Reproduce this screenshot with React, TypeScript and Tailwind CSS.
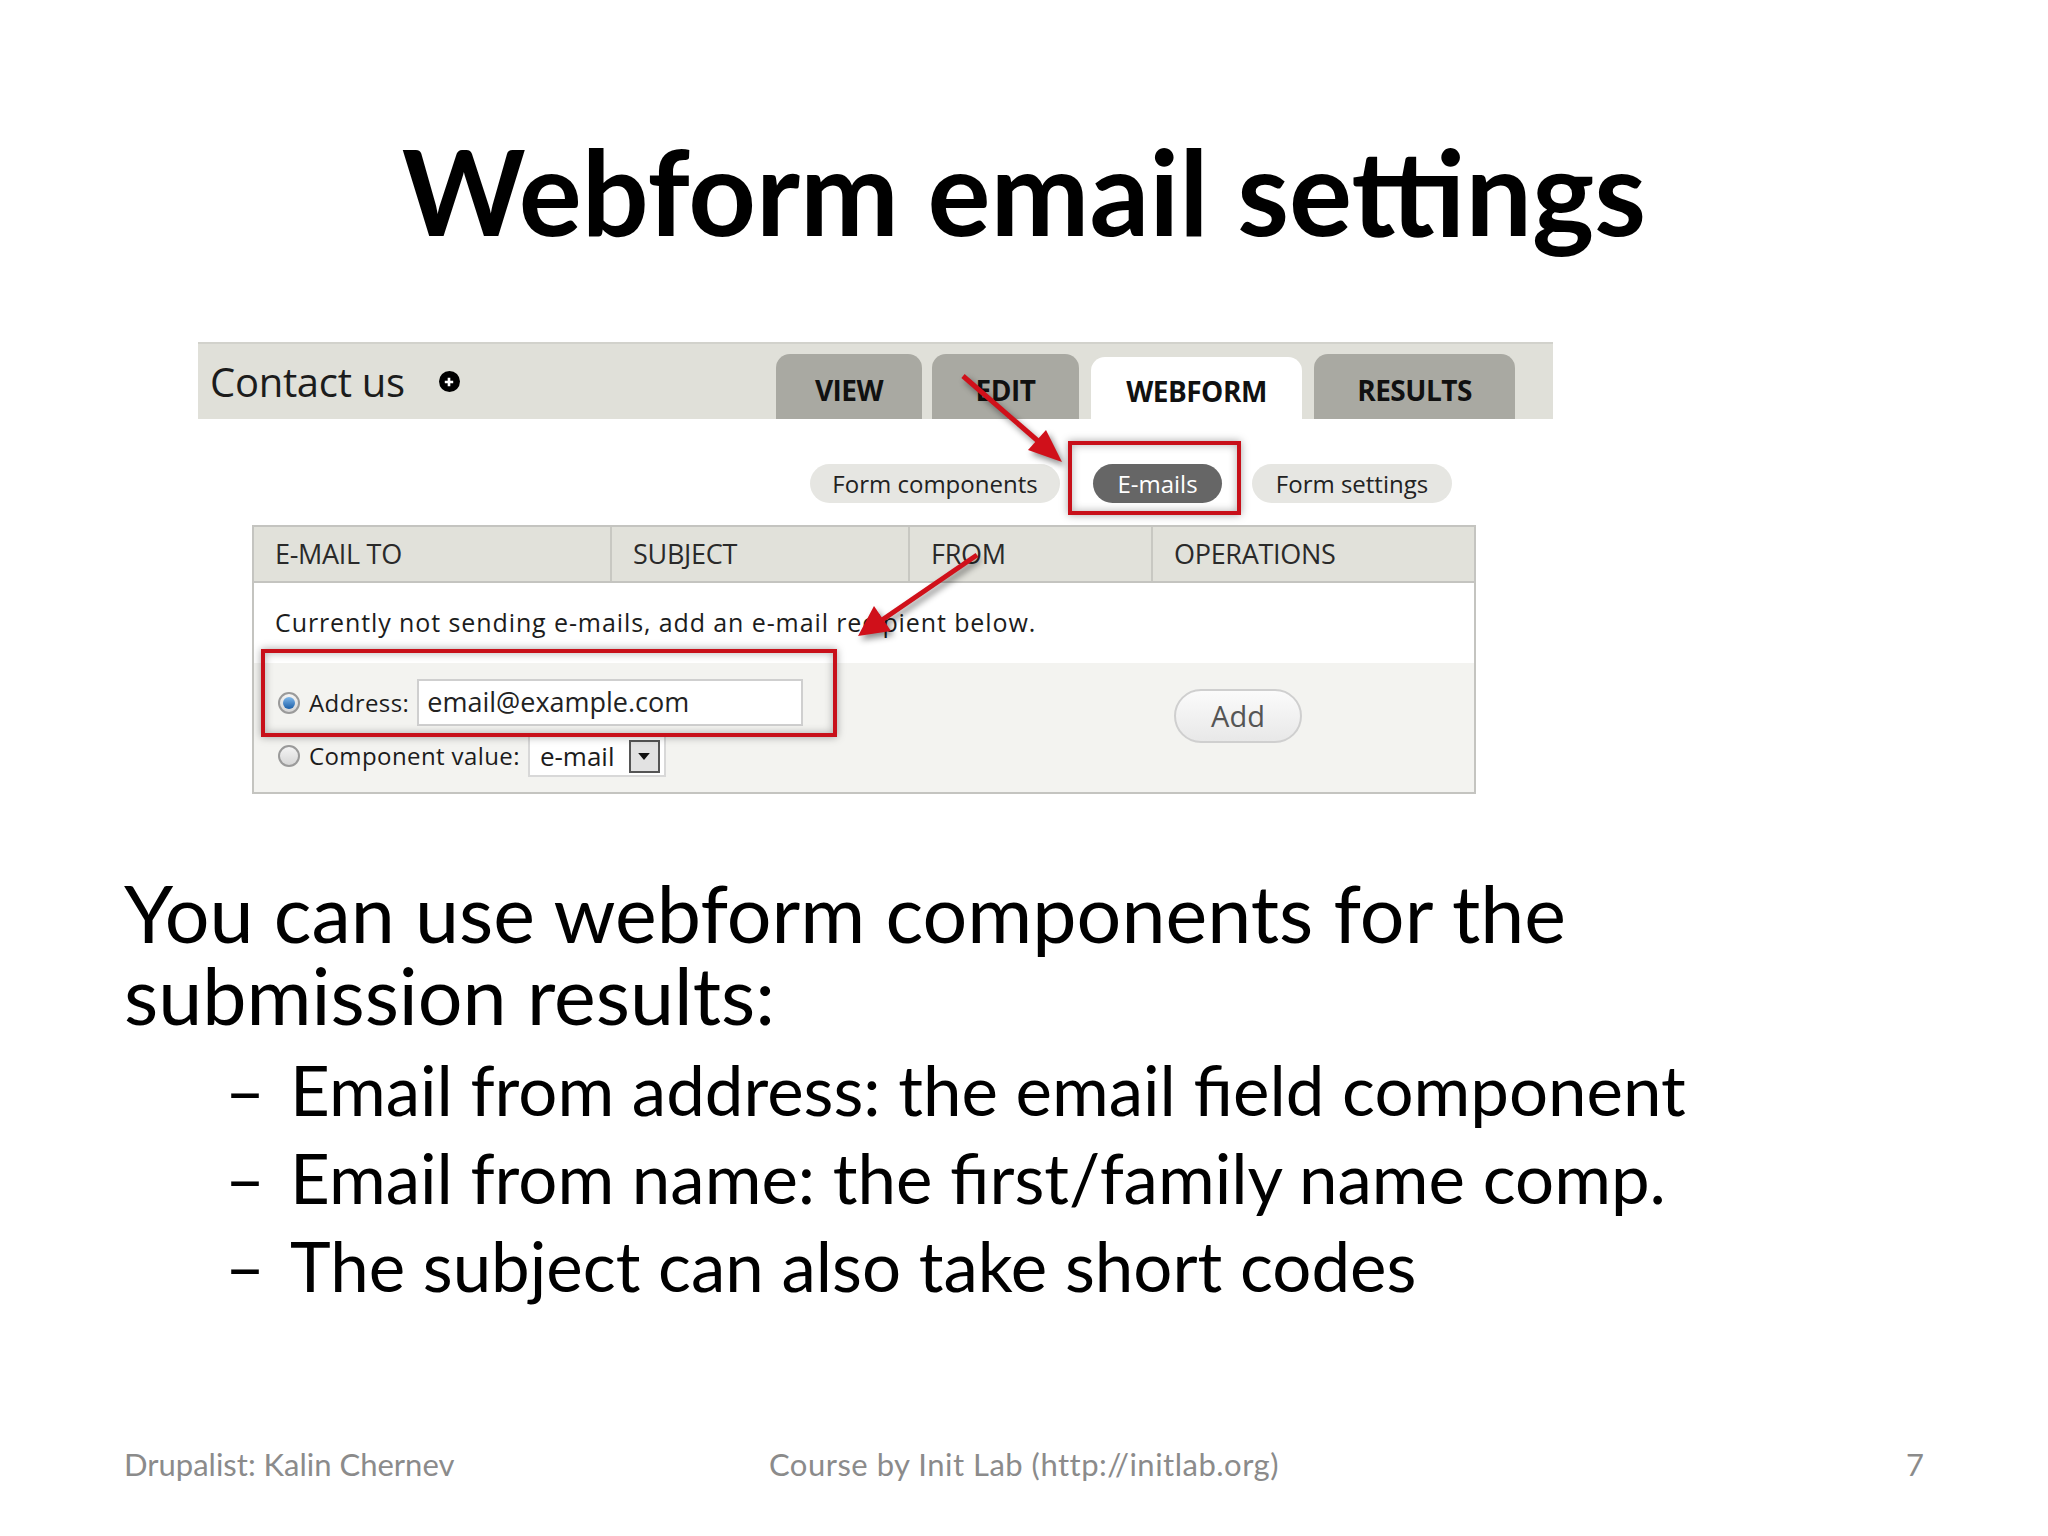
import React from "react";

const slideFont = { fontFamily: "Lato, 'Noto Sans', sans-serif" };
const shotFont = { fontFamily: "'Open Sans', 'Noto Sans', sans-serif" };

function Radio({ on }: { on?: boolean }) {
  return (
    <span className="flex h-[22px] w-[22px] shrink-0 items-center justify-center rounded-full border-2 border-[#9a9a9a] bg-gradient-to-b from-[#f4f4f4] to-[#d6d6d6]">
      {on && <span className="h-[12px] w-[12px] rounded-full bg-gradient-to-b from-[#7fb8ea] to-[#1a5fa8]" />}
    </span>
  );
}

function Tab({ label, active, w }: { label: string; active?: boolean; w: string }) {
  return (
    <div
      className={
        "flex items-center justify-center rounded-t-[14px] text-[28px] font-bold tracking-[-0.5px] text-[#111] " +
        w +
        (active ? " h-[62px] bg-white" : " h-[65px] bg-[#a9a9a2]")
      }
    >
      <span className="mt-[6px]">{label}</span>
    </div>
  );
}

function Screenshot() {
  return (
    <div className="relative ml-[198px] w-[1355px]" style={shotFont}>
      {/* header bar */}
      <div className="flex h-[77px] items-end border-t-2 border-[#d2d2cc] bg-[#e0e0d9]">
        <div className="flex h-full w-[578px] items-center pl-[12px]">
          <span className="text-[40px] leading-none tracking-[-0.3px] text-[#1c1c1c]">Contact us</span>
          <span className="ml-[34px] flex h-[21px] w-[21px] items-center justify-center rounded-full bg-black">
            <svg viewBox="0 0 10 10" className="h-[12px] w-[12px]">
              <path d="M5 1.5v7M1.5 5h7" stroke="white" strokeWidth="2.2" />
            </svg>
          </span>
        </div>
        <div className="flex items-end">
          <Tab label="VIEW" w="w-[146px]" />
          <div className="w-[10px]" />
          <Tab label="EDIT" w="w-[147px]" />
          <div className="w-[12px]" />
          <Tab label="WEBFORM" w="w-[211px]" active />
          <div className="w-[12px]" />
          <Tab label="RESULTS" w="w-[201px]" />
        </div>
      </div>

      {/* secondary tabs */}
      <div className="ml-[612px] mt-[45px] flex h-[39px] items-center text-[24px] text-[#222]">
        <div className="flex h-full w-[250px] items-center justify-center rounded-full bg-[#e6e6e2]">Form components</div>
        <div className="ml-[33px] flex h-full w-[129px] items-center justify-center rounded-full bg-[#666666] text-white">E-mails</div>
        <div className="ml-[30px] flex h-full w-[200px] items-center justify-center rounded-full bg-[#e6e6e2]">Form settings</div>
      </div>

      {/* table */}
      <div className="ml-[54px] mt-[22px] w-[1224px] border-2 border-[#c4c4c0]">
        <div className="flex h-[56px] border-b-2 border-[#c4c4c0] bg-[#e1e1da] text-[27px] tracking-[-0.3px] text-[#2a2a2a]">
          <div className="flex w-[358px] items-center border-r-2 border-[#c8c8c2] pl-[21px]">E-MAIL TO</div>
          <div className="flex w-[298px] items-center border-r-2 border-[#c8c8c2] pl-[21px]">SUBJECT</div>
          <div className="flex w-[243px] items-center border-r-2 border-[#c8c8c2] pl-[21px]">FROM</div>
          <div className="flex flex-1 items-center pl-[21px]">OPERATIONS</div>
        </div>
        <div className="flex h-[80px] items-center bg-white pl-[21px] text-[25px] tracking-[0.9px] text-[#1c1c1c]">
          Currently not sending e-mails, add an e-mail recipient below.
        </div>
        <div className="flex h-[129px] bg-[#f3f3f0]">
          <div className="flex w-[899px] flex-col pl-[24px] pt-[16px] text-[24px] tracking-[0.4px] text-[#1c1c1c]">
            <div className="flex h-[47px] items-center">
              <Radio on />
              <span className="ml-[9px]">Address:</span>
              <div className="ml-[8px] flex h-[47px] w-[386px] items-center border-2 border-[#cfcfcf] bg-white pl-[8px] text-[27px] tracking-normal text-[#222]">
                email@example.com
              </div>
            </div>
            <div className="mt-[9px] flex h-[42px] items-center">
              <Radio />
              <span className="ml-[9px]">Component value:</span>
              <div className="ml-[8px] flex h-[42px] w-[138px] items-center border-2 border-[#d8d8d8] bg-white pl-[10px] text-[26px] tracking-normal">
                <span className="flex-1">e-mail</span>
                <span className="mr-[4px] flex h-[33px] w-[31px] items-center justify-center border-2 border-[#555] bg-[#e2e2e2]">
                  <svg viewBox="0 0 10 6" className="h-[7px] w-[12px]">
                    <path d="M0 0h10L5 6z" fill="#111" />
                  </svg>
                </span>
              </div>
            </div>
          </div>
          <div className="flex flex-1 items-start pl-[21px] pt-[26px]">
            <div className="flex h-[54px] w-[128px] items-center justify-center rounded-full border-2 border-[#cfcfcf] bg-gradient-to-b from-[#fbfbfb] to-[#e8e8e8] text-[29px] text-[#555]">
              Add
            </div>
          </div>
        </div>
      </div>

      {/* annotations */}
      <div className="absolute left-[870px] top-[99px] h-[74px] w-[173px] border-4 border-[#c8101a] shadow-[0_0_8px_rgba(0,0,0,0.35),inset_0_0_8px_rgba(0,0,0,0.3)]" />
      <div className="absolute left-[63px] top-[307px] h-[88px] w-[576px] border-4 border-[#c8101a] shadow-[0_0_8px_rgba(0,0,0,0.35),inset_0_0_8px_rgba(0,0,0,0.3)]" />
      <svg className="pointer-events-none absolute left-0 top-0 h-[452px] w-[1355px] drop-shadow-[3px_4px_3px_rgba(0,0,0,0.45)]" viewBox="0 0 1355 452">
        <line x1="765" y1="34" x2="840" y2="99" stroke="#d0101a" strokeWidth="5" />
        <polygon points="864,120 830,108 848,88" fill="#d0101a" />
        <line x1="779" y1="213" x2="684" y2="278" stroke="#d0101a" strokeWidth="5" />
        <polygon points="660,294 676,264 693,289" fill="#d0101a" />
      </svg>
    </div>
  );
}

export default function App() {
  return (
    <div className="flex h-[1536px] w-[2048px] flex-col bg-white text-black" style={slideFont}>
      <h1 className="mt-[120px] h-[142px] text-center text-[118px] font-bold leading-[142px]">Webform email settings</h1>
      <div className="mt-[80px]">
        <Screenshot />
      </div>
      <div className="ml-[124px] mt-[78px] text-[79px] leading-[82px]">
        <div>You can use webform components for the</div>
        <div>submission results:</div>
      </div>
      <div className="mt-[10px] text-[69px] leading-[88px]">
        {[
          "Email from address: the email field component",
          "Email from name: the first/family name comp.",
          "The subject can also take short codes",
        ].map((t) => (
          <div key={t} className="flex">
            <span className="w-[290px] pl-[225px]">–</span>
            <span>{t}</span>
          </div>
        ))}
      </div>
      <div className="mt-auto mb-[52px] grid h-[40px] grid-cols-3 px-[124px] text-[31px] leading-[40px] text-[#8b8b8b]">
        <span>Drupalist: Kalin Chernev</span>
        <span className="whitespace-nowrap text-center tracking-[0.5px]">Course by Init Lab (http://initlab.org)</span>
        <span className="text-right">7</span>
      </div>
    </div>
  );
}
